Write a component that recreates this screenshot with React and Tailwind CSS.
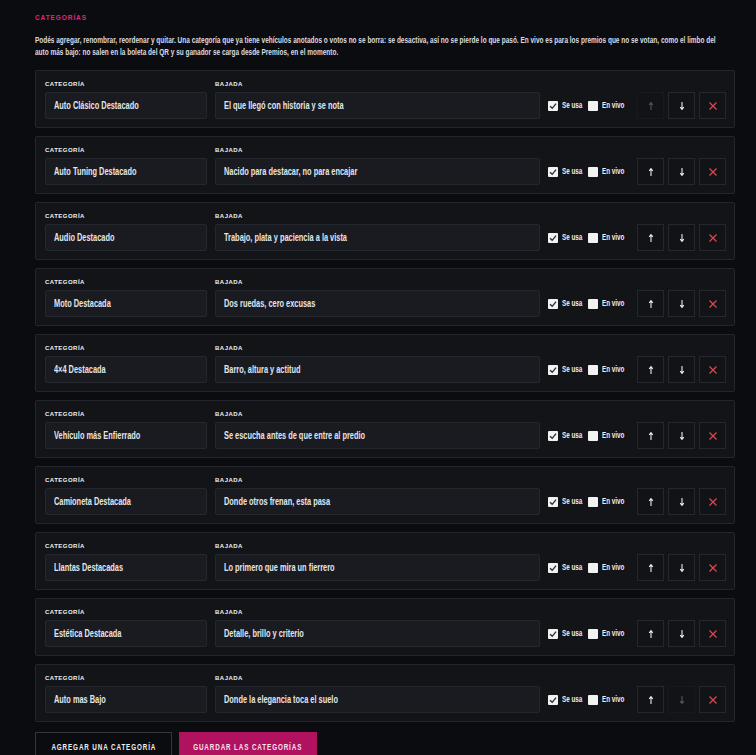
import React from "react";

const rows = [
  ["Auto Clásico Destacado", "El que llegó con historia y se nota"],
  ["Auto Tuning Destacado", "Nacido para destacar, no para encajar"],
  ["Audio Destacado", "Trabajo, plata y paciencia a la vista"],
  ["Moto Destacada", "Dos ruedas, cero excusas"],
  ["4×4 Destacada", "Barro, altura y actitud"],
  ["Vehículo más Enfierrado", "Se escucha antes de que entre al predio"],
  ["Camioneta Destacada", "Donde otros frenan, esta pasa"],
  ["Llantas Destacadas", "Lo primero que mira un fierrero"],
  ["Estética Destacada", "Detalle, brillo y criterio"],
  ["Auto mas Bajo", "Donde la elegancia toca el suelo"],
];

const font = { fontFamily: '"Liberation Sans", Arial, sans-serif' };

function Check({ checked }) {
  return (
    <span className="flex h-[10px] w-[10px] shrink-0 items-center justify-center rounded-[1px] bg-[#f2f2f2]">
      {checked && (
        <svg width="8" height="8" viewBox="0 0 10 10">
          <path d="M1.3 5.3 L4 7.9 L8.8 2" fill="none" stroke="#2a2d33" strokeWidth="1.7" />
        </svg>
      )}
    </span>
  );
}

function IconBtn({ children, dim }) {
  return (
    <button className={`flex h-[27px] w-[27px] items-center justify-center border border-[#24272d] bg-[#121317] ${dim ? "opacity-30" : ""}`}>
      {children}
    </button>
  );
}

function Up() {
  return (
    <svg width="8" height="10" viewBox="0 0 8 10">
      <path d="M4 9 V1.8 M2.2 3.8 L4 1.6 L5.8 3.8" fill="none" stroke="#e8ecea" strokeWidth="1.1" />
    </svg>
  );
}
function Down() {
  return (
    <svg width="8" height="10" viewBox="0 0 8 10">
      <path d="M4 1 V8.2 M2.2 6.2 L4 8.4 L5.8 6.2" fill="none" stroke="#e8ecea" strokeWidth="1.1" />
    </svg>
  );
}
function X() {
  return (
    <svg width="10" height="10" viewBox="0 0 10 10">
      <path d="M1.5 1.5 L8.5 8.5 M8.5 1.5 L1.5 8.5" fill="none" stroke="#d9474d" strokeWidth="1.3" />
    </svg>
  );
}

function Field({ label, value, w }) {
  return (
    <div className={`flex ${w} shrink-0 flex-col`}>
      <span className="mb-[4px] h-[7px] text-[6px] font-bold leading-[7px] tracking-[0.08em] text-[#f0f0f2]">{label}</span>
      <div className="flex h-[27px] items-center overflow-hidden rounded-[2px] border border-[#24272d] bg-[#191b20] pl-[8px]">
        <span className="block origin-left scale-x-[0.74] whitespace-nowrap text-[10px] font-bold text-[#e4e5e9]">{value}</span>
      </div>
    </div>
  );
}

export default function App() {
  return (
    <div className="min-h-[755px] w-[756px] overflow-hidden bg-[#0b0c0f] pl-[35px] pt-[14px] text-[#e6e7ea]" style={font}>
      <div className="h-[8px] text-[6.5px] font-bold leading-[8px] tracking-[0.14em] text-[#e0267a]">CATEGORÍAS</div>
      <div className="mt-[12px] w-[1000px] origin-top-left scale-x-[0.72] whitespace-nowrap text-[9px] font-bold leading-[12px] text-[#dcdde2]">
        Podés agregar, renombrar, reordenar y quitar. Una categoría que ya tiene vehículos anotados o votos no se borra: se desactiva, así no se pierde lo que pasó. En vivo es para los premios que no se votan, como el limbo del
        <br />
        auto más bajo: no salen en la boleta del QR y su ganador se carga desde Premios, en el momento.
      </div>
      <div className="mt-[12px] flex w-[700px] flex-col gap-[8px]">
        {rows.map(([cat, baj], i) => (
          <div key={i} className="flex h-[58px] items-end gap-[8px] rounded-[2px] border border-[#24262c] bg-[#131418] pb-[8px] pl-[9px] pr-[8px]">
            <Field label="CATEGORÍA" value={cat} w="w-[162px]" />
            <Field label="BAJADA" value={baj} w="w-[325px]" />
            <div className="flex h-[27px] items-center">
              <Check checked />
              <span className="ml-[4px] w-[26px] overflow-visible">
                <span className="block origin-left scale-x-[0.74] whitespace-nowrap text-[8.5px] font-bold text-[#eeeef0]">Se usa</span>
              </span>
              <Check />
              <span className="ml-[4px] w-[24px]">
                <span className="block origin-left scale-x-[0.74] whitespace-nowrap text-[8.5px] font-bold text-[#eeeef0]">En vivo</span>
              </span>
            </div>
            <div className="ml-auto flex gap-[4px]">
              <IconBtn dim={i === 0}><Up /></IconBtn>
              <IconBtn dim={i === rows.length - 1}><Down /></IconBtn>
              <IconBtn><X /></IconBtn>
            </div>
          </div>
        ))}
      </div>
      <div className="mt-[10px] flex gap-[7px]">
        <button className="flex h-[30px] w-[137px] items-center justify-center border border-[#34363c] bg-[#0b0c0f]">
          <span className="block scale-x-[0.74] whitespace-nowrap text-[8.5px] font-bold tracking-[0.14em] text-[#eef0f2]">AGREGAR UNA CATEGORÍA</span>
        </button>
        <button className="flex h-[30px] w-[138px] items-center justify-center bg-[#b0125f]">
          <span className="block scale-x-[0.74] whitespace-nowrap text-[8.5px] font-bold tracking-[0.14em] text-[#f6e6ef]">GUARDAR LAS CATEGORÍAS</span>
        </button>
      </div>
    </div>
  );
}
